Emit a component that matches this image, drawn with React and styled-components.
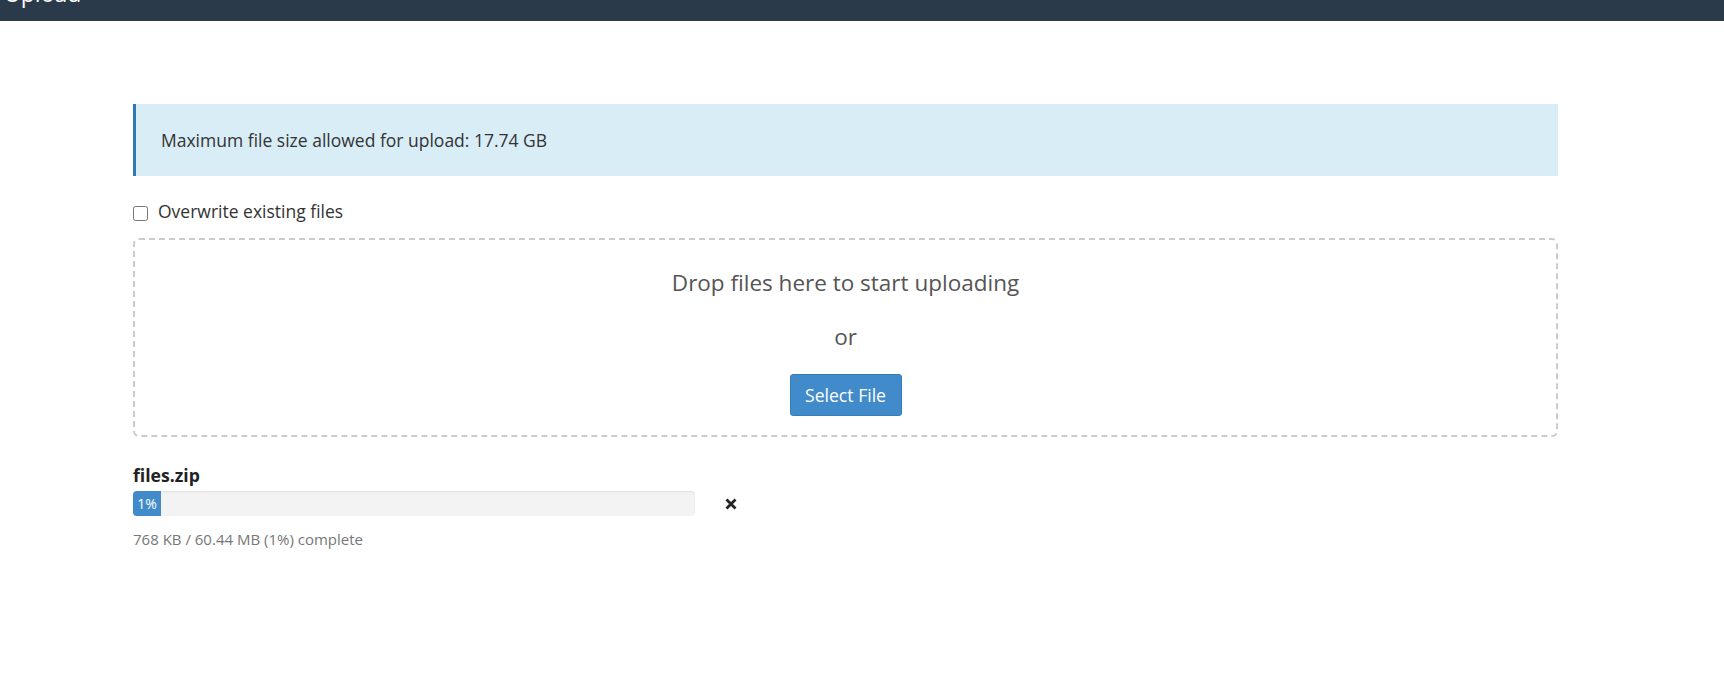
import styled, { createGlobalStyle } from "styled-components";

const Global = createGlobalStyle`
    body {
        margin: 0;
        background: #fff;
        font-family: "Open Sans", "Liberation Sans", sans-serif;
        color: #333;
    }
`;

const App = () => {
    return (
        <>
            <Global />
            <Header>
                <HeaderTitle>Upload</HeaderTitle>
            </Header>
            <Contenedor>
                <Alerta>Maximum file size allowed for upload: 17.74 GB</Alerta>
                <Opcion>
                    <Check type="checkbox" />
                    Overwrite existing files
                </Opcion>
                <ZonaDrop>
                    <DropTexto>Drop files here to start uploading</DropTexto>
                    <DropTexto $small>or</DropTexto>
                    <Boton>Select File</Boton>
                </ZonaDrop>
                <Archivo>
                    <Nombre>files.zip</Nombre>
                    <FilaProgreso>
                        <Barra>
                            <Relleno style={{ width: "28px" }}>1%</Relleno>
                        </Barra>
                        <Cerrar aria-label="cancel">
                            <svg width="12" height="12" viewBox="0 0 12 12">
                                <path d="M1.5 1.5 L10.5 10.5 M10.5 1.5 L1.5 10.5" stroke="#222" strokeWidth="2.8" strokeLinecap="butt" />
                            </svg>
                        </Cerrar>
                    </FilaProgreso>
                    <Estado>768 KB / 60.44 MB (1%) complete</Estado>
                </Archivo>
            </Contenedor>
        </>
    );
};

const Header = styled.header`
    height: 21px;
    background: #2b3a4a;
    overflow: hidden;
    padding-left: 4px;
`;

const HeaderTitle = styled.h1`
    margin: -23px 0 0;
    font-size: 23px;
    font-weight: 400;
    line-height: normal;
    color: #fff;
`;

const Contenedor = styled.main`
    margin: 83px 0 0 133px;
    width: 1425px;
`;

const Alerta = styled.div`
    background: #d9edf7;
    border-left: 3px solid #2f7ab5;
    padding: 24px 25px;
    font-size: 17.5px;
    line-height: 24px;
    color: #333;
`;

const Opcion = styled.label`
    display: flex;
    align-items: center;
    gap: 10px;
    margin-top: 23px;
    font-size: 17.5px;
    line-height: 24px;
    color: #333;
`;

const Check = styled.input`
    width: 15px;
    height: 15px;
    margin: 4px 0 0;
`;

const ZonaDrop = styled.div`
    margin-top: 15px;
    border: 2px dashed #ccc;
    border-radius: 6px;
    padding: 28px 0 19px;
    display: flex;
    flex-direction: column;
    align-items: center;
`;

const DropTexto = styled.p`
    margin: 0 0 ${(p) => (p.$small ? "22.5px" : "23.5px")};
    font-size: 22.5px;
    line-height: 30px;
    color: #555;
`;

const Boton = styled.button`
    width: 112px;
    height: 42px;
    background: #428bca;
    border: 1px solid #357ebd;
    border-radius: 3px;
    color: #fff;
    font-family: inherit;
    font-size: 17.6px;
    cursor: pointer;
`;

const Archivo = styled.section`
    margin-top: 26px;
`;

const Nombre = styled.div`
    font-size: 17.6px;
    font-weight: 700;
    line-height: 24px;
    color: #222;
`;

const FilaProgreso = styled.div`
    display: flex;
    align-items: center;
    gap: 30px;
    margin-top: 4px;
`;

const Barra = styled.div`
    width: 562px;
    height: 25px;
    background: #f3f3f3;
    border-radius: 4px;
    box-shadow: inset 0 1px 2px rgba(0, 0, 0, 0.08);
    overflow: hidden;
    display: flex;
`;

const Relleno = styled.div`
    background: #428bca;
    color: #fff;
    font-size: 14px;
    line-height: 25px;
    text-align: center;
`;

const Cerrar = styled.button`
    border: 0;
    background: none;
    padding: 0;
    display: flex;
    cursor: pointer;
`;

const Estado = styled.div`
    margin-top: 13px;
    font-size: 15px;
    line-height: 20px;
    color: #777;
`;

export default App;
